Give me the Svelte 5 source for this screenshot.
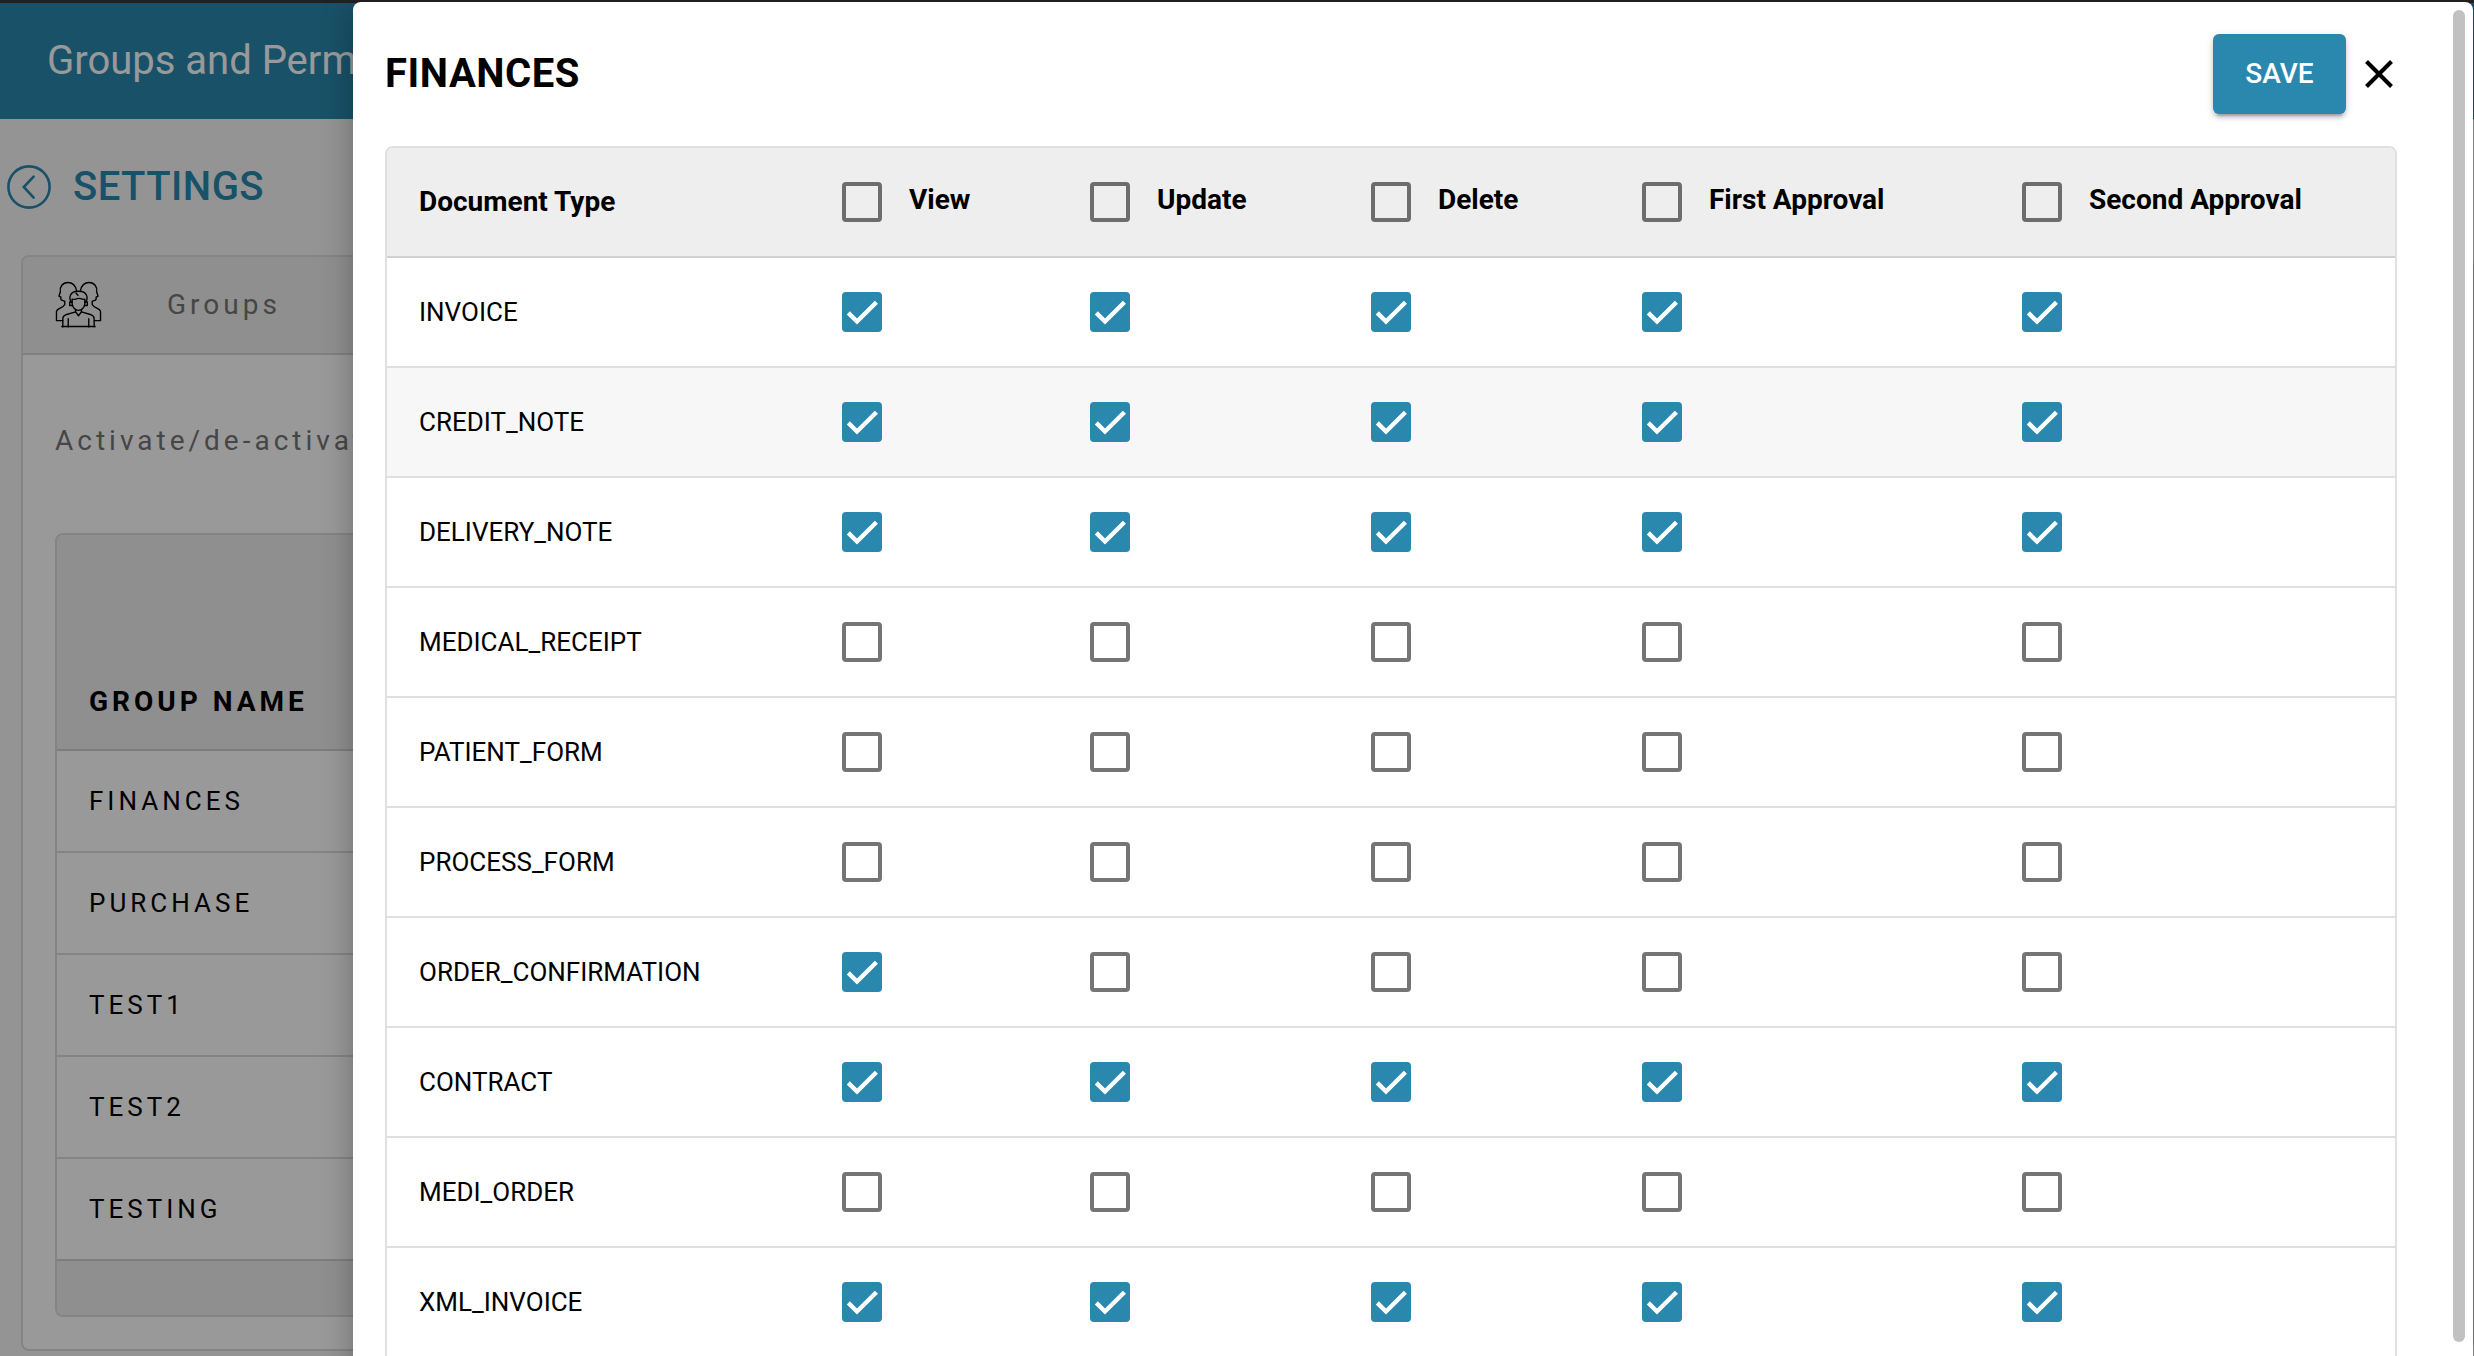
<script>
  const columns = ['View', 'Update', 'Delete', 'First Approval', 'Second Approval'];
  const all = [true, true, true, true, true];
  const none = [false, false, false, false, false];

  let documents = $state([
    { name: 'INVOICE', rights: [...all] },
    { name: 'CREDIT_NOTE', rights: [...all], active: true },
    { name: 'DELIVERY_NOTE', rights: [...all] },
    { name: 'MEDICAL_RECEIPT', rights: [...none] },
    { name: 'PATIENT_FORM', rights: [...none] },
    { name: 'PROCESS_FORM', rights: [...none] },
    { name: 'ORDER_CONFIRMATION', rights: [true, false, false, false, false] },
    { name: 'CONTRACT', rights: [...all] },
    { name: 'MEDI_ORDER', rights: [...none] },
    { name: 'XML_INVOICE', rights: [...all] }
  ]);

  const groups = ['FINANCES', 'PURCHASE', 'TEST1', 'TEST2', 'TESTING'];
</script>

{#snippet checkbox(checked)}
  <svg class="box" viewBox="0 0 40 40">
    {#if checked}
      <rect class="box-fill" width="40" height="40" rx="4" />
      <path class="tick" d="M6.3 20.900 15 29.500 34.400 10.200" />
    {:else}
      <rect class="box-line" x="2" y="2" width="36" height="36" rx="2" />
    {/if}
  </svg>
{/snippet}

<div class="screen">
  <div class="page">
    <header class="topbar">Groups and Perm</header>
    <div class="title">
      <svg class="back" viewBox="0 0 44 44">
        <circle cx="22" cy="22" r="20.6" />
        <path d="M26.6 11.6 16.8 22l9.8 10.6" />
      </svg>
      <span>SETTINGS</span>
    </div>
    <section class="card">
      <div class="card-head">
        <svg class="people" viewBox="0 0 48 48">
          <path d="M13.5 47v-8.500M34.500 47v-8.500M8 47V38.500Q8 35.500 11 34.500L21 31.500V29M40 47V38.500Q40 35.500 37 34.500L27 31.500V29M7 46.500H41" />
          <path d="M21 31.500 24 35.500 27 31.500" />
          <path d="M17.500 18.500V23C17.500 27 21 30 24 30S30.500 27 30.500 23V18.500C28 19.500 27 17.500 24 17.800S20 19.500 17.500 18.500Z" />
          <path d="M17 21.500C15 20 14.800 16.500 15.800 14.500 17 11.500 20.500 10.500 24 10.500S31 11.500 32.200 14.500C33.200 16.500 33 20 31 21.500M23.500 14.500 21.500 12.500" />
          <path d="M17.500 21.500H15V25H18M30.500 21.500H33V25H30" />
          <path d="M22 10C21 4.500 17.500 1.500 13 1.500 8 1.500 4.500 6 5.500 11L4 15.500 6 16.500V18.500C6 20 8 20 10 20.500V24C8 28 2 27.500 1.500 31V40.500H8" />
          <path d="M26 10C27 4.500 30.500 1.500 35 1.500 40 1.500 43.500 6 42.500 11L44 15.500 42 16.500V18.500C42 20 40 20 38 20.500V24C40 28 46 27.500 46.500 31V40.500H40" />
        </svg>
        <span>Groups</span>
      </div>
      <p class="hint">Activate/de-activat</p>
      <div class="groups">
        <div class="groups-head">GROUP NAME</div>
        {#each groups as group}
          <div class="groups-row">{group}</div>
        {/each}
        <div class="groups-foot"></div>
      </div>
    </section>
  </div>

  <div class="backdrop"></div>

  <div class="modal">
    <div class="content">
      <div class="modal-head">
        <h2>FINANCES</h2>
        <button class="save">SAVE</button>
        <svg class="close" viewBox="0 0 28 28"><path d="M1.500 1.500 26.500 26.500M26.500 1.500 1.500 26.500" /></svg>
      </div>
      <div class="table">
        <div class="row head">
          <span class="first">Document Type</span>
          {#each columns as column}
            <div class="cell">{@render checkbox(false)}<span class="label">{column}</span></div>
          {/each}
        </div>
        {#each documents as doc}
          <div class="row" class:active={doc.active}>
            <span>{doc.name}</span>
            {#each doc.rights as right}
              <div class="cell">{@render checkbox(right)}</div>
            {/each}
          </div>
        {/each}
      </div>
    </div>
    <div class="scrollbar"></div>
  </div>
</div>

<style>
  :global(body) { overflow: hidden; }
  .screen, .screen * { box-sizing: border-box; }
  .screen {
    position: relative;
    width: 2474px;
    height: 1356px;
    overflow: hidden;
    font-family: Roboto, sans-serif;
    font-size: 26px;
    color: #000;
  }
  .page {
    height: 1356px;
    border-top: 3px solid #3a3636;
    background: #f7f7f7;
    white-space: nowrap;
  }
  .topbar {
    height: 116px;
    padding: 0 0 1px 47px;
    display: flex;
    align-items: center;
    background: #2a87ae;
    color: #fff;
    font-size: 40px;
  }
  .title {
    height: 136px;
    padding: 0 0 1px 7px;
    display: flex;
    align-items: center;
    gap: 22px;
    color: #2a87ae;
    font-size: 40px;
    font-weight: 500;
    letter-spacing: 0.45px;
  }
  .back { width: 44px; height: 44px; fill: none; stroke: #2a87ae; stroke-width: 2.6; stroke-linecap: round; }
  .card {
    margin-left: 21px;
    height: 1096px;
    border: 2px solid #dcdcdc;
    border-radius: 8px;
    background: #fff;
    letter-spacing: 4px;
    overflow: hidden;
  }
  .card-head {
    height: 98px;
    padding: 0 0 1px 32px;
    display: flex;
    align-items: center;
    gap: 65px;
    background: #eee;
    border-bottom: 2px solid #d6d6d6;
    font-size: 28px;
    color: #757575;
  }
  .people { width: 47px; height: 47px; fill: none; stroke: #000; stroke-width: 1.400; stroke-linejoin: round; stroke-linecap: round; }
  .hint { margin: 0; height: 178px; padding: 68px 0 0 32px; font-size: 28px; line-height: 36px; color: #757575; }
  .groups { margin-left: 32px; border: 2px solid #dcdcdc; border-radius: 8px; overflow: hidden; height: 784px; }
  .groups-head {
    height: 216px;
    padding: 149px 32px 0;
    background: #eee;
    border-bottom: 2px solid #d0d0d0;
    font-size: 28px;
    line-height: 36px;
    font-weight: 700;
  }
  .groups-row { height: 102px; padding: 0 32px; line-height: 100px; border-bottom: 2px solid #dcdcdc; }
  .groups-row:nth-last-child(2) { border-color: #d0d0d0; }
  .groups-foot { height: 56px; background: #eee; }

  .backdrop { position: absolute; inset: 0; background: rgba(0, 0, 0, 0.4); }

  .modal {
    position: absolute;
    left: 353px;
    top: 2px;
    width: 2120px;
    height: 1400px;
    padding: 8px 8px 0 32px;
    display: flex;
    justify-content: space-between;
    background: #fff;
    border-radius: 8px;
    box-shadow: 0 8px 32px rgba(0, 0, 0, 0.28);
  }
  .content { width: 2012px; }
  .modal-head { height: 136px; padding: 0 4px 8px 0; display: flex; align-items: center; }
  h2 { margin: 0; padding-bottom: 1px; flex: 1; font-size: 40px; font-weight: 700; letter-spacing: 0.55px; }
  .save {
    width: 133px;
    height: 80px;
    padding: 0 0 1px;
    border: 0;
    border-radius: 6px;
    background: #2a87ae;
    color: #fff;
    font: 500 28px Roboto, sans-serif;
    box-shadow: 0 6px 2px -4px rgba(0, 0, 0, 0.2), 0 4px 4px rgba(0, 0, 0, 0.14), 0 2px 10px rgba(0, 0, 0, 0.12);
  }
  .close { width: 28px; height: 28px; margin-left: 19px; fill: none; stroke: #000; stroke-width: 4.100; }
  .table { border: 2px solid #e0e0e0; border-radius: 8px 8px 0 0; overflow: hidden; }
  .row {
    height: 110px;
    padding-left: 32px;
    display: grid;
    grid-template-columns: 423px 248px 281px 271px 380px 1fr;
    align-items: center;
    border-bottom: 2px solid #e0e0e0;
  }
  .active { background: #f7f7f7; }
  .head { background: #eee; border-color: #d0d0d0; font-size: 28px; font-weight: 700; }
  .first { padding-bottom: 2px; }
  .cell { display: flex; align-items: center; gap: 27px; white-space: nowrap; }
  .label { padding-bottom: 5px; }
  .box { width: 40px; height: 40px; display: block; }
  .box-fill { fill: #2a87ae; }
  .box-line { fill: none; stroke: #757575; stroke-width: 4; }
  .head .box-line { stroke: #6d6d6d; }
  .tick { fill: none; stroke: #fff; stroke-width: 4.400; }
  .scrollbar { width: 12px; height: 1332px; border-radius: 6px; background: #c1c1c1; }
</style>
